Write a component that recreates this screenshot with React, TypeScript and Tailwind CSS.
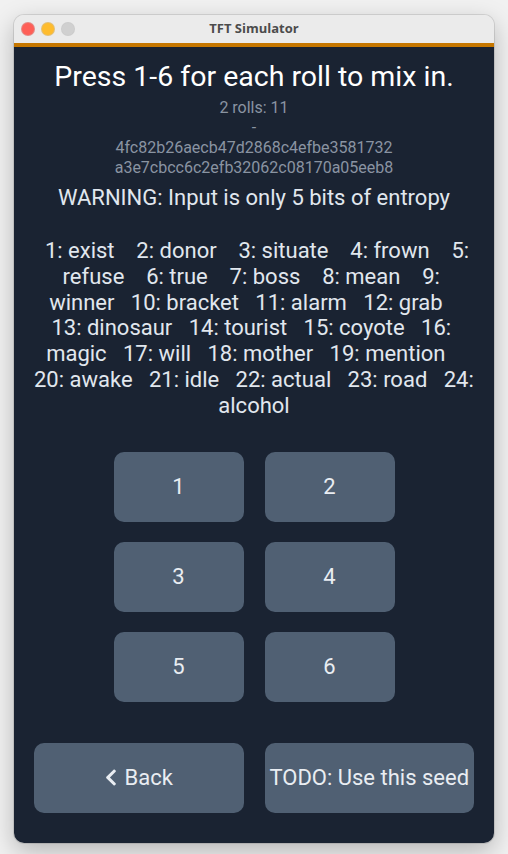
import React from "react";
import { FaChevronLeft } from "react-icons/fa";

const wordLines = [
  "  1: exist    2: donor    3: situate    4: frown    5: ",
  "refuse    6: true    7: boss    8: mean    9: ",
  "winner   10: bracket   11: alarm   12: grab   ",
  "13: dinosaur   14: tourist   15: coyote   16: ",
  "magic   17: will   18: mother   19: mention   ",
  "20: awake   21: idle   22: actual   23: road   24: ",
  "alcohol",
];

function NumButton({ n }: { n: number }) {
  return (
    <button className="h-[70px] w-[130px] rounded-[10px] bg-[#506073] text-[22px] leading-[26px] text-[#e9edf2]">
      {n}
    </button>
  );
}

export default function App() {
  return (
    <div className="flex h-[854px] w-[508px] justify-center bg-[#f1f1f1] pt-[15px]" style={{ fontFamily: "Roboto, 'Noto Sans', sans-serif" }}>
      <div className="flex h-[828px] w-[480px] flex-col overflow-hidden rounded-[10px] shadow-[0_8px_24px_rgba(0,0,0,0.25)] ring-1 ring-black/10">
        <div className="relative flex h-[28px] items-center justify-center bg-[#ebebeb]">
          <div className="absolute left-[8px] top-[8px] flex gap-[8px]">
            <span className="h-[12px] w-[12px] rounded-full bg-[#fe5f57] ring-1 ring-[#e0443e]/60" />
            <span className="h-[12px] w-[12px] rounded-full bg-[#febc2e] ring-1 ring-[#dea123]/60" />
            <span className="h-[12px] w-[12px] rounded-full bg-[#d0d0d0] ring-1 ring-[#b8b8b8]/60" />
          </div>
          <span className="text-[13px] font-bold text-[#4c4c4c]" style={{ fontFamily: "'Open Sans', 'Noto Sans', sans-serif" }}>TFT Simulator</span>
        </div>
        <div className="h-[4px] bg-[#c67700]" />
        <div className="flex flex-1 flex-col items-center bg-[#1a2332] px-[20px] pt-[15px]">
          <div className="text-[28.5px] leading-[30px] text-white">Press 1-6 for each roll to mix in.</div>
          <div className="mt-[6px] text-center text-[16px] leading-[20px] text-[#8a94a2]">
            <div>2 rolls: 11</div>
            <div>-</div>
            <div>4fc82b26aecb47d2868c4efbe3581732</div>
            <div>a3e7cbcc6c2efb32062c08170a05eeb8</div>
          </div>
          <div className="mt-[7px] text-[22px] leading-[26px] text-[#e1e7ee]">WARNING: Input is only 5 bits of entropy</div>
          <div className="mt-[27px] w-full text-center text-[22px] leading-[25.8px] text-[#e1e7ee]">
            {wordLines.map((l, i) => (
              <div key={i} className="whitespace-pre">{l}</div>
            ))}
          </div>
          <div className="mt-[33px] grid grid-cols-2 gap-x-[21px] gap-y-[20px]">
            {[1, 2, 3, 4, 5, 6].map((n) => (
              <NumButton key={n} n={n} />
            ))}
          </div>
          <div className="mt-[41px] grid w-full grid-cols-2 gap-x-[21px]">
            <button className="flex h-[70px] items-center justify-center gap-[8px] rounded-[10px] bg-[#506073] text-[22px] leading-[26px] text-[#e9edf2]">
              <FaChevronLeft className="h-[19px] w-[12px]" />
              <span>Back</span>
            </button>
            <button className="flex h-[70px] items-center justify-center whitespace-nowrap rounded-[10px] bg-[#506073] text-[22px] leading-[26px] text-[#e9edf2]">
              TODO: Use this seed
            </button>
          </div>
        </div>
      </div>
    </div>
  );
}
